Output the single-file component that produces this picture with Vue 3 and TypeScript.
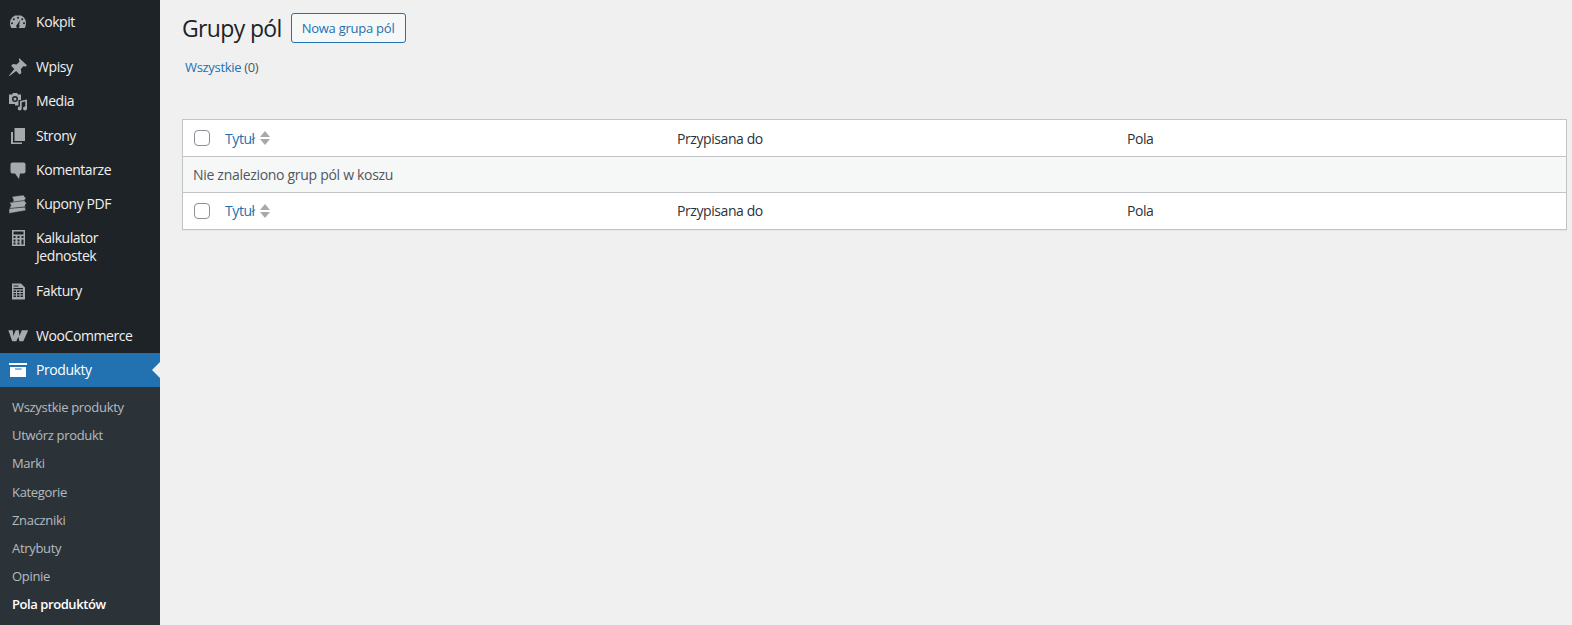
<script setup lang="ts">
type MenuItem = { label: string; icon: string; gap?: boolean };

const topItems: MenuItem[] = [
  { label: "Kokpit", icon: "dash" },
  { label: "Wpisy", icon: "pin", gap: true },
  { label: "Media", icon: "media" },
  { label: "Strony", icon: "pages" },
  { label: "Komentarze", icon: "comment" },
  { label: "Kupony PDF", icon: "coupon" },
  { label: "Kalkulator Jednostek", icon: "calc" },
  { label: "Faktury", icon: "invoice" },
];

const subItems = [
  "Wszystkie produkty",
  "Utwórz produkt",
  "Marki",
  "Kategorie",
  "Znaczniki",
  "Atrybuty",
  "Opinie",
];
</script>

<template>
  <div class="page">
    <aside class="sidebar">
      <ul class="menu">
        <li v-for="item in topItems" :key="item.label" class="item" :class="{ gap: item.gap }">
          <span class="ico">
            <svg v-if="item.icon === 'dash'" viewBox="0 0 20 20">
              <path d="M10 3a8 8 0 0 0-8 8c0 1.800.5 3.500 1.300 5h13.400a9 9 0 0 0 1.300-5 8 8 0 0 0-8-8zM10 4.700a1 1 0 1 1 0 2 1 1 0 0 1 0-2zM5.800 6.200a1 1 0 1 1 0 2 1 1 0 0 1 0-2zM14.200 6.200a1 1 0 1 1 0 2 1 1 0 0 1 0-2zM4 10.300a1 1 0 1 1 0 2 1 1 0 0 1 0-2zM16 10.300a1 1 0 1 1 0 2 1 1 0 0 1 0-2zM12.200 8l-1.100 5a1.700 1.700 0 1 1-2.100-.3z" fill-rule="evenodd" />
            </svg>
            <svg v-else-if="item.icon === 'pin'" viewBox="0 0 20 20">
              <path d="M11 1l8 7.300-1.700 1.500-1.500-.7-3 3 .6 3.800-1.900 1.600-3.300-3.400L1.500 19l-.5-.5 5.300-6.500-3.200-3.300 1.900-1.700 3.600.6 3-3-.6-1.500z" />
            </svg>
            <svg v-else-if="item.icon === 'media'" viewBox="0 0 20 20">
              <path d="M1 3.500h3l1-1.500h4l1 1.500h3v5.500h-2.500v5.500H7V13H1zM7 5a3 3 0 1 0 0 6 3 3 0 0 0 0-6zM7 6.500a1.500 1.500 0 1 1 0 3 1.500 1.500 0 0 1 0-3z" fill-rule="evenodd" />
              <path d="M12 10l7-1.500v9a2 2 0 1 1-1.700-2v-5l-3.600.8v6.200a2 2 0 1 1-1.700-2z" />
            </svg>
            <svg v-else-if="item.icon === 'pages'" viewBox="0 0 20 20">
              <path d="M6.500 2H17v13H6.500zM3 6h2v10.500h9V18H3z" />
            </svg>
            <svg v-else-if="item.icon === 'comment'" viewBox="0 0 20 20">
              <path d="M4.500 2.500h11a2 2 0 0 1 2 2v7a2 2 0 0 1-2 2H12l-1 5.500-4-5.500H4.500a2 2 0 0 1-2-2v-7a2 2 0 0 1 2-2z" />
            </svg>
            <svg v-else-if="item.icon === 'coupon'" viewBox="0 0 20 20" stroke="#1d2327" stroke-width="0.6">
              <path d="M4 2.500L15.500 1l2.500 3.500-1.500 1.500.7 2L5 10l-.7-2L5.500 6.500z" />
              <path d="M1.500 8.500L16.500 6.500l2 3-1.500 1.500.7 2L2.500 15l-.7-2L3 11.500z" />
              <path d="M1 14.500l16-1.500 1 3.500L1 19.500z" />
            </svg>
            <svg v-else-if="item.icon === 'calc'" viewBox="0 0 20 20">
              <path d="M4 2h13v16H4zM5.500 3.500v3h10v-3zM5.500 8v2h2V8zM9.500 8v2h2V8zM13.500 8v2h2V8zM5.500 11.500v2h2v-2zM9.500 11.500v2h2v-2zM13.500 11.500v5h2v-5zM5.500 14.500v2h2v-2zM9.500 14.500v2h2v-2z" fill-rule="evenodd" />
            </svg>
            <svg v-else viewBox="0 0 20 20">
              <path d="M4 2.400h9l4 4v12H4zM5.500 4.500v1h5v-1zM5.500 7v1.200h9.500V7zM5.500 9.500v1.500H8V9.500zM9 9.500V11h2.500V9.500zM12.500 9.500V11H15V9.500zM5.500 12v1.500H8V12zM9 12v1.500h2.500V12zM12.500 12v1.500H15V12zM5.500 14.500V16H8v-1.500zM9 14.500V16h2.500v-1.500zM12.500 14.500V16H15v-1.500z" fill-rule="evenodd" />
            </svg>
          </span>
          <span class="label">{{ item.label }}</span>
        </li>
        <li class="item gap">
          <span class="ico">
            <svg viewBox="0 0 20 20">
              <path d="M0 4.200h4.800l.5 5.800 2.400-5.800h3.100l.6 5.800 2.400-5.800h5.700c.5 0 .6.400.3 1L15.300 15.200h-3.900l-1-4.500-2.100 4.500H4.200L.8 5.500C.5 4.700.4 4.200 0 4.200z" />
            </svg>
          </span>
          <span class="label">WooCommerce</span>
        </li>
        <li class="item current">
          <span class="ico">
            <svg viewBox="0 0 20 20">
              <path d="M1 3h18v2H1zM2 7h16v10H2zM7 8.500v1h6.700v-1z" fill-rule="evenodd" />
            </svg>
          </span>
          <span class="label">Produkty</span>
        </li>
      </ul>
      <ul class="submenu">
        <li v-for="sub in subItems" :key="sub">{{ sub }}</li>
        <li class="active">Pola produktów</li>
      </ul>
    </aside>

    <main class="content">
      <div class="heading">
        <h1>Grupy pól</h1>
        <a class="add-btn">Nowa grupa pól</a>
      </div>
      <p class="filters"><a>Wszystkie</a> <span>(0)</span></p>

      <div class="table">
        <div class="row head">
          <span class="check"></span>
          <span class="col-title"><a>Tytuł</a><i class="sort"></i></span>
          <span class="col-assign">Przypisana do</span>
          <span class="col-fields">Pola</span>
        </div>
        <div class="row empty">Nie znaleziono grup pól w koszu</div>
        <div class="row head foot">
          <span class="check"></span>
          <span class="col-title"><a>Tytuł</a><i class="sort"></i></span>
          <span class="col-assign">Przypisana do</span>
          <span class="col-fields">Pola</span>
        </div>
      </div>
    </main>
  </div>
</template>

<style>
html,
body {
  margin: 0;
  background: #f0f0f1;
}
</style>

<style scoped>
.page {
  display: flex;
  height: 625px;
  overflow: hidden;
  font-family: "Open Sans", "Noto Sans", sans-serif;
  font-size: 13px;
  letter-spacing: -0.32px;
  color: #3c434a;
}

.sidebar {
  width: 160px;
  flex: none;
  background: #1d2327;
  color: #f0f0f1;
  padding-top: 5px;
  box-sizing: border-box;
}

.menu,
.submenu {
  list-style: none;
  margin: 0;
  padding: 0;
}

.item {
  display: flex;
  position: relative;
  padding: 8px 0;
  font-size: 14px;
  line-height: 18.2px;
  letter-spacing: -0.42px;
}

.item.gap {
  margin-top: 11px;
}

.ico {
  width: 36px;
  flex: none;
  padding-left: 8px;
  box-sizing: border-box;
}

.ico svg {
  display: block;
  width: 20px;
  height: 20px;
  margin: -1px 0 -2px;
  fill: #a7aaad;
}

.label {
  flex: 1;
  padding-right: 20px;
}

.current {
  background: #2271b1;
  color: #fff;
}

.current .ico svg {
  fill: #fff;
}

.current::after {
  content: "";
  position: absolute;
  right: 0;
  top: 50%;
  margin-top: -8px;
  border: 8px solid transparent;
  border-right-color: #f0f0f1;
  border-left: 0;
}

.submenu {
  background: #2c3338;
  padding: 6px 0 8px;
}

.submenu li {
  padding: 5px 12px;
  line-height: 18.1px;
  color: rgba(240, 246, 252, 0.7);
  white-space: nowrap;
}

.submenu li.active {
  color: #fff;
  font-weight: 600;
  letter-spacing: -0.43px;
}

.content {
  flex: 1;
  min-width: 0;
  padding: 0 5px 0 22px;
}

.heading {
  display: flex;
  align-items: flex-start;
  padding-top: 13px;
}

h1 {
  margin: 0;
  font-size: 23px;
  font-weight: 400;
  line-height: 30px;
  letter-spacing: -0.65px;
  color: #1d2327;
}

.add-btn {
  margin-left: 9px;
  height: 30px;
  box-sizing: border-box;
  border: 1px solid #2271b1;
  border-radius: 3px;
  background: #f6f7f7;
  color: #2271b1;
  padding: 0 11px 0 10px;
  line-height: 29px;
  letter-spacing: -0.25px;
}

.filters {
  margin: 15px 0 0 3px;
  line-height: 18px;
  color: #50575e;
}

.filters a {
  color: #2271b1;
}

.table {
  margin-top: 43px;
  border: 1px solid #c3c4c7;
  background: #fff;
  box-shadow: 0 1px 1px rgba(0, 0, 0, 0.04);
  font-size: 14px;
  letter-spacing: -0.42px;
  color: #2c3338;
}

.row {
  display: flex;
  align-items: center;
  box-sizing: border-box;
  height: 36px;
}

.row.empty {
  background: #f6f7f7;
  border-top: 1px solid #c3c4c7;
  border-bottom: 1px solid #c3c4c7;
  height: 37px;
  padding-left: 10px;
  letter-spacing: -0.3px;
  color: #50575e;
}

.foot .col-assign,
.foot .col-fields,
.foot .col-title a {
  margin-bottom: 2px;
}

.check {
  width: 16px;
  height: 16px;
  flex: none;
  box-sizing: border-box;
  margin-left: 11px;
  border: 1px solid #8c8f94;
  border-radius: 4px;
  background: #fff;
}

.col-title {
  width: 452px;
  flex: none;
  margin-left: 15px;
  display: flex;
  align-items: center;
  color: #2271b1;
}

.sort {
  position: relative;
  width: 10px;
  height: 16px;
  margin-left: 5px;
}

.sort::before,
.sort::after {
  content: "";
  position: absolute;
  left: 0;
  border: 5px solid transparent;
  border-top: 0;
  border-bottom: 6px solid #a7aaad;
}

.sort::before {
  top: 1px;
}

.sort::after {
  bottom: 1px;
  transform: rotate(180deg);
}

.col-assign {
  width: 450px;
  flex: none;
}
</style>
